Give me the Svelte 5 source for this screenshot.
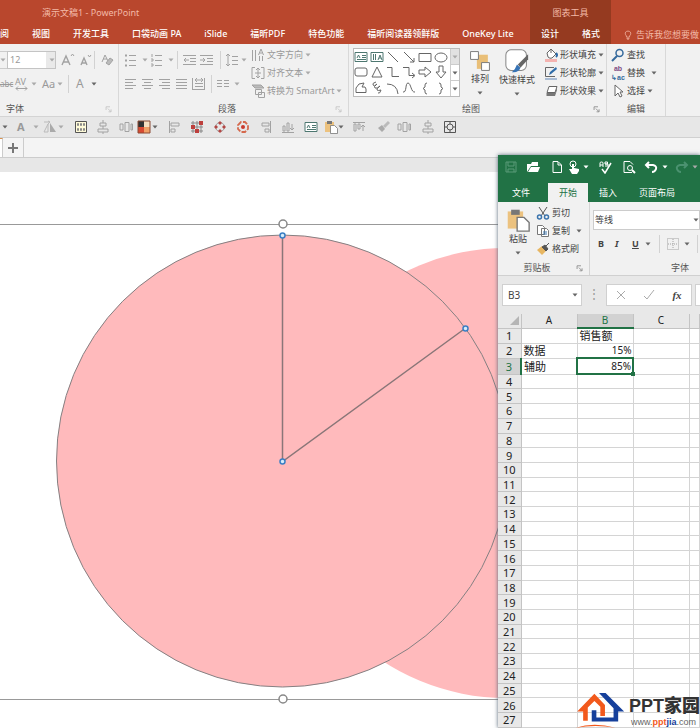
<script lang="ts">
    const tabs = ["阅", "视图", "开发工具", "口袋动画 PA", "iSlide", "福昕PDF", "特色功能", "福昕阅读器领鲜版", "OneKey Lite"];

    const shapes = [
        "textbox", "vtextbox", "line", "arrowline", "rect", "oval",
        "round", "triangle", "elbow", "elbowarrow", "rightarrow", "downarrow",
        "freeform", "scribble", "arc", "curve", "lbrace", "rbrace",
    ];

    const quick = [
        "caretdark", "fonta", "caret", "flip", "caret", "grid", "aligncenter", "distribute",
        "palette", "caretdark", "alignleft", "swatches", "nodes", "nodesred", "alignright",
        "alignbottom", "textbox", "paste", "caretdark", "aligntop", "brush", "distribute",
        "aligncenter", "fit",
    ];

    // the unnamed last column fills the rest of the window
    const columns = ["A", "B", "C", ""];
    const rows = Array.from({ length: 27 }, (_, i) => i + 1);
    const cells: Record<string, string> = {
        B1: "销售额",
        A2: "数据",
        B2: "15%",
        A3: "辅助",
        B3: "85%",
    };

    let fontSize = $state("12");
    let fontName = $state("等线");
    let cellRef = $state("B3");
    let formula = $state("");

    // every icon is drawn on a 14 x 14 board
    const icons: Record<string, string> = {
        caret: '<path d="M.5 5.500h5l-2.500 3z" fill="#aaa" stroke="none"/>',
        caretdark: '<path d="M.5 5.500h5l-2.500 3z" fill="#666" stroke="none"/>',
        caretwhite: '<path d="M.5 5.500h5l-2.500 3z" fill="#fff" stroke="none"/>',
        growa: '<path d="M1 12L5 3l4 9M2.500 9h5" stroke-width="1.400"/><path d="M10 3l1.500-2L13 3"/>',
        shrinka: '<path d="M2 12l3-7 3 7M3 10h4" stroke-width="1.400"/><path d="M9 2l1.500 2L12 2"/>',
        clear: '<path d="M2 9L5 2l3 6M3 6h4"/><path d="M6 10l4-5 3 2-4 5z" fill="#bbb"/>',
        bullets: '<path d="M5 2.500h7M5 7.500h7M5 12.500h7"/><path d="M1 2.500h2M1 7.500h2M1 12.500h2" stroke-width="2"/>',
        numbers: '<path d="M5 2.500h7M5 7.500h7M5 12.500h7M2 1v3M1 6h2v2H1M1 11h2v2H1"/>',
        outdent: '<path d="M0 2.500h13M7 5.500h6M7 8.500h6M0 11.500h13M1 7h5M3 5L1 7l2 2"/>',
        indent: '<path d="M0 2.500h13M7 5.500h6M7 8.500h6M0 11.500h13M0 7h5M3 5l2 2-2 2"/>',
        linespace: '<path d="M3 1v12M1 3l2-2 2 2M1 11l2 2 2-2M7 3.500h6M7 7.500h6M7 11.500h6"/>',
        left: '<path d="M1 2.500h11M1 5.500h8M1 8.500h11M1 11.500h8"/>',
        center: '<path d="M1 2.500h11M3 5.500h7M1 8.500h11M3 11.500h7"/>',
        right: '<path d="M1 2.500h11M4 5.500h8M1 8.500h11M4 11.500h8"/>',
        justify: '<path d="M1 2.500h11M1 5.500h11M1 8.500h11M1 11.500h11"/>',
        spread: '<path d="M.5 1v12M12.500 1v12M3 6.500h8M3 9.500h8M1 12.500h11M3 3h8M5 1L3 3l2 2M9 1l2 2-2 2"/>',
        cols: '<path d="M1 3.500h5M8 3.500h5M1 6.500h5M8 6.500h5M1 9.500h5M8 9.500h5"/>',
        direction: '<path d="M1.500 2v11M4.500 2v11M8.500 8v5M11.500 8v5M7.500 7L10 1l2.500 6M8.500 5h3"/>',
        aligntext: '<path d="M4 1.500H1v11h3M10 1.500h3v11h-3M4 7h6M7 2v10M5 4l2-2 2 2M5 10l2 2 2-2"/>',
        smartart: '<path d="M1 1h9l3 3H4z" fill="#bbb"/><path d="M4.500 5.500h6v5h-6zM7.500 8.500h6v5h-6z" fill="#f1f1f1"/>',
        launcher: '<path d="M1.500 7V2.500H7M4 5l4 4M8.500 6v3.500H5"/>',
        textbox: '<path d="M1 2.500h12v9H1z" fill="#fff" stroke="#4d7770"/><path d="M3 8l1.500-3L6 8M8 5.500h4M8 7.500h4M3 9.500h9" stroke="#4d7770"/>',
        vtextbox: '<path d="M1 2.500h12v9H1z" fill="#fff" stroke="#4d7770"/><path d="M3.500 4v6M5.500 4v6M8 10l2-5 2 5M9 8h2" stroke="#4d7770"/>',
        line: '<path d="M2 2l10 10"/>',
        arrowline: '<path d="M2 2l10 10M12 8v4H8"/>',
        rect: '<path d="M1 3.500h12v8H1z"/>',
        oval: '<ellipse cx="7" cy="7.500" rx="6" ry="4.500"/>',
        round: '<rect x="1" y="3" width="12" height="8" rx="2"/>',
        triangle: '<path d="M7 2l5 10H2z"/>',
        elbow: '<path d="M1 2.500h5v9h7"/>',
        elbowarrow: '<path d="M1 2.500h6v8h5M10 8l3 2.500-3 2.500"/>',
        rightarrow: '<path d="M1 5h6V2l6 5-6 5V9H1z"/>',
        downarrow: '<path d="M5 1h4v6h3l-5 6-5-6h3z"/>',
        freeform: '<path d="M2 11.500V7l3-4 5-1-2 4q4-1 4 2v3.500z"/>',
        scribble: '<path d="M6 1Q2 2 3 4t4-1Q3 6 5 7t5-2Q6 8 7 9t4 0q-1 4-3 3"/>',
        arc: '<path d="M1 3q10 0 11 10"/>',
        curve: '<path d="M1 11C5 12 3 2 6 2s3 10 7 9"/>',
        lbrace: '<path d="M9 2Q7 2 7 4v2L5 7.500 7 9v2q0 2 2 2"/>',
        rbrace: '<path d="M5 2q2 0 2 2v2l2 1.500L7 9v2q0 2-2 2"/>',
        flip: '<path d="M1 12l4-8v8zM1 2h6M5 1l2 1-2 2" stroke="#bbb"/><path d="M7 3l6 9H7z" fill="#aaa" stroke="none"/>',
        grid: '<path d="M1.500 1.500h11v11h-11z" fill="#fffbd8" stroke="#555"/><path d="M3.500 3.500h1v2h-1zM6.500 3.500h1v2h-1zM9.500 3.500h1v2h-1zM3.500 8.500h1v2h-1zM6.500 8.500h1v2h-1zM9.500 8.500h1v2h-1z" stroke="#888"/>',
        aligncenter: '<path d="M7 0v3M7 6v3M7 12v2M4 3h6v3H4zM2 9h10v3H2z"/>',
        distribute: '<path d="M1 4h3v6H1zM6 2.500h4v9H6zM12 4h1.500v6H12z"/>',
        palette: '<path d="M1 1h6v6H1z" fill="#333" stroke="none"/><path d="M7 1h6v6H7z" fill="#f7dfc1" stroke="none"/><path d="M1 7h6v6H1z" fill="#d84a32" stroke="none"/><path d="M7 7h6v6H7z" fill="#f1a066" stroke="none"/><path d="M1 1h12v12H1z" stroke="#8b4b35"/>',
        alignleft: '<path d="M2.500 1v12M4 3h8v3H4zM4 9h4v3H4z"/>',
        alignright: '<path d="M11.500 1v12M3 3h7v3H3zM6 9h4v3H6z"/>',
        alignbottom: '<path d="M1 12.500h12M2 6h2v5H2zM6 3h2v8H6zM11 4v6M9 8l2 2 2-2"/>',
        aligntop: '<path d="M1 2.500h12M2 4h2v7H2zM6 4h2v5H6zM11 5v6M9 7l2-2 2 2"/>',
        swatches: '<path d="M2 2h2v2H2zM6 2h2v2H6zM2 10h2v2H2zM10 6h2v2h-2z" stroke="#888"/><path d="M9 1h4v4H9zM1 5h4v4H1zM5 9h4v4H5z" fill="#bd3f3c" stroke="none"/><path d="M6 6h2v2H6zM10 10h2v2h-2z" stroke="#888"/>',
        nodes: '<circle cx="7" cy="7" r="4.500"/><path d="M7 1l2 2-2 2-2-2zM7 9l2 2-2 2-2-2zM3 5l2 2-2 2-2-2zM11 5l2 2-2 2-2-2z" fill="#b34744" stroke="none"/>',
        nodesred: '<path d="M5 2L2 5v4l3 3h4l3-3V5L9 2z" stroke="#d5694d" stroke-width="1.800" stroke-dasharray="5 1.500"/><circle cx="7" cy="7" r="2" fill="#c93a2e" stroke="none"/>',
        paste: '<path d="M1 2h9v10H1z" fill="#ecc27f" stroke="none"/><path d="M3 1h5v3H3z" fill="#777" stroke="none"/><path d="M6.500 5.500h4l3 3v5h-7z" fill="#fff" stroke="#777" stroke-width=".8"/>',
        brush: '<path d="M2 8l4-3 3 4-3 3z" fill="#aaa" stroke="none"/><path d="M8 7l5-5" stroke-width="3" stroke="#bbb"/>',
        fit: '<path d="M1.500 1.500h11v11h-11z" stroke="#555"/><circle cx="7" cy="7" r="3" stroke="#555"/><path d="M7 1v3M7 10v3M1 7h3M10 7h3" stroke="#555"/>',
        arrange: '<path d="M5 3h7v9H5z" fill="#e9bf78" stroke="none"/><path d="M1 1h5v5H1zM8 8h5v5H8z" fill="#fff" stroke="#777" stroke-width=".6"/>',
        styles: '<rect x=".5" y=".5" width="12" height="12" rx="3" fill="#fff" stroke="#888" stroke-width=".6"/><path d="M13.500 3v3L9 11 7.500 9z" fill="#666" stroke="none"/><path d="M7 9l2 2q-1 3-5 2.500Q6 12 7 9z" fill="#3673b5" stroke="none"/>',
        fill: '<path d="M3 5l4-4 5 5-4 4q-2 1-4-1z" fill="#fff" stroke="#666"/><path d="M7 1v4" stroke="#666"/><path d="M12 5q2 2 0 4" stroke="#2f6ca8" stroke-width="2"/><path d="M1 11h12v3H1z" fill="#f4b3b0" stroke="none"/>',
        outline: '<path d="M10 1.500H1.500v9H11" stroke="#666"/><path d="M5 9l1-3 6-5 1 2-6 5z" fill="#2f6ca8" stroke="none"/><path d="M1 13h12" stroke="#a9bcd4" stroke-width="2"/>',
        effects: '<path d="M5 2.500h8l-2 6H3z" fill="#fff" stroke="#666"/><path d="M2.500 9h8.500l2-6v3l-2 6H2.500z" fill="#777" stroke="none"/>',
        find: '<circle cx="8.500" cy="5" r="3.500" stroke="#35699c" stroke-width="1.500"/><path d="M6 8l-5 5" stroke="#35699c" stroke-width="2"/>',
        select: '<path d="M4 1v11l3-3 2 4 2-1-2-4h3z" fill="#fff" stroke="#666"/>',
        bulb: '<path d="M5 10q0-2-1.500-3.500Q2 2 7 1.500q5 .5 3.500 5Q9 8 9 10zM5 12h4M6 13.500h2" stroke="#f6c3b2"/>',
        plus: '<path d="M7 2v10M2 7h10" stroke="#777" stroke-width="2"/>',
        save: '<path d="M2 2h10v10H2zM4 2v4h6V2M4 12V9h6v3" stroke="#5a9a79"/>',
        open: '<path d="M1 12V4h4l1-2h6v4H5z" fill="#fff" stroke="none"/><path d="M5 7h9l-2 5H2z" fill="#fff" stroke="none"/>',
        page: '<path d="M3 1.500h5L11.500 5v7.500H3zM8 2v3h3" stroke="#fff"/>',
        touch: '<circle cx="6" cy="4" r="3" stroke="#fff"/><path d="M5 4h2v4l5 1v2l-2 3H5L2 9h3z" fill="#fff" stroke="none"/>',
        spell: '<path d="M2 7V3q0-1 1.500-1T5 3v4M2 5h3M7 2h2.500v2H7zM7 4h3v2H7" stroke="#fff"/><path d="M4 9l3 4 6-10" stroke="#fff" stroke-width="1.500"/>',
        preview: '<path d="M10 12.500H2v-11h6l3 3" stroke="#fff"/><circle cx="8" cy="8" r="2.500" stroke="#fff"/><path d="M10 10l3 3" stroke="#fff" stroke-width="2"/>',
        undo: '<path d="M2 5h7q4 1 3 4-1 3-4 3M5 2L2 5l3 3" stroke="#fff" stroke-width="2"/>',
        redo: '<path d="M12 5H5Q1 6 2 9q1 3 4 3M9 2l3 3-3 3" stroke="#4b9270" stroke-width="2"/>',
        cut: '<path d="M3 1l6 9M11 1L5 10" stroke="#555"/><circle cx="3.500" cy="11" r="2" stroke="#3b74ad" stroke-width="1.500"/><circle cx="10.500" cy="11" r="2" stroke="#3b74ad" stroke-width="1.500"/>',
        copy: '<path d="M1.500 1.500h5l2 2v7h-7zM5.500 4.500h5l2 2v6h-7z" fill="#fff" stroke="#777"/><path d="M7 8h4M7 10h4" stroke="#3b74ad"/>',
        painter: '<path d="M1 8l5-4 4 5-4 4z" fill="#e7b662" stroke="none"/><path d="M6 5l3-2 3 4-2 2zM10 4l3-3" fill="#555" stroke="#555"/>',
        borders: '<path d="M1.500 1.500h11v11h-11zM7 2v10M2 7h10" stroke-dasharray="1 1"/>',
        paint: '<path d="M3 6l4-4 4 4-4 4z" stroke="#666"/><path d="M1 11h12v3H1z" fill="#ffe62e" stroke="none"/>',
        cancel: '<path d="M3 3l8 8M11 3l-8 8" stroke="#aaa"/>',
        accept: '<path d="M2 8l3 3 7-9" stroke="#aaa"/>',
    };
</script>

{#snippet icon(name: string, size = "")}
    <svg class="icon {size}" class:thin={name.startsWith("caret")} viewBox={name.startsWith("caret") ? "0 0 6 14" : "0 0 14 14"} aria-hidden="true">
        {@html icons[name]}
    </svg>
{/snippet}

<div class="screen">
    <header class="titlebar">
        <div class="titles">演示文稿1 - PowerPoint</div>
        <nav class="tabs">
            {#each tabs as tab}
                <button>{tab}</button>
            {/each}
        </nav>
        <div class="context">
            <div class="context-title">图表工具</div>
            <button>设计</button>
            <button>格式</button>
        </div>
        <button class="tell">{@render icon("bulb", "small")}告诉我您想要做</button>
    </header>

    <div class="ribbon">
        <section class="group font-group">
            <div class="group-body two-rows">
                <div class="font-top">
                    <button class="combo-end" aria-label="Font list">{@render icon("caret")}</button>
                    <label class="size-box">
                        <input bind:value={fontSize} aria-label="Font size" />
                        {@render icon("caret")}
                    </label>
                    <button aria-label="Grow font">{@render icon("growa")}</button>
                    <button aria-label="Shrink font">{@render icon("shrinka")}</button>
                    <i class="rule"></i>
                    <button aria-label="Clear formatting">{@render icon("clear")}</button>
                </div>
                <div class="font-bottom">
                    <button class="strike">abc</button>
                    <button class="kerning">
                        AV
                        <svg class="icon flat" viewBox="0 0 14 5" aria-hidden="true"><path d="M1 2.500h11M3 .5l-2 2 2 2M10 .5l2 2-2 2" /></svg>
                    </button>
                    {@render icon("caret")}
                    <button class="letters">Aa</button>
                    {@render icon("caret")}
                    <i class="rule"></i>
                    <button class="letters big">A</button>
                    {@render icon("caretdark")}
                </div>
            </div>
            <footer class="font-label">字体</footer>
            <span class="launch dim">{@render icon("launcher", "small")}</span>
        </section>

        <section class="group para-group">
            <div class="group-body para-body">
                <div class="two-rows">
                    <div class="para-top">
                        {@render icon("bullets")}{@render icon("caret")}
                        {@render icon("numbers")}{@render icon("caret")}
                        <i class="rule"></i>
                        {@render icon("outdent")}{@render icon("indent")}
                        <i class="rule"></i>
                        {@render icon("linespace")}{@render icon("caret")}
                    </div>
                    <div class="para-bottom">
                        {#each ["left", "center", "right", "justify", "spread"] as name}
                            <button aria-label={name}>{@render icon(name)}</button>
                        {/each}
                        <i class="rule"></i>
                        {@render icon("cols")}{@render icon("caret")}
                    </div>
                </div>
                <div class="stack">
                    <button>{@render icon("direction")}文字方向{@render icon("caret")}</button>
                    <button>{@render icon("aligntext")}对齐文本{@render icon("caret")}</button>
                    <button>{@render icon("smartart")}转换为 SmartArt{@render icon("caret")}</button>
                </div>
            </div>
            <footer class="launched">段落</footer>
            <span class="launch dim">{@render icon("launcher", "small")}</span>
        </section>

        <section class="group draw-group">
            <div class="group-body draw-body">
                <div class="gallery">
                    <div class="shapes">
                        {#each shapes as shape}
                            <button aria-label={shape}>{@render icon(shape)}</button>
                        {/each}
                    </div>
                    <div class="scroll">
                        <button class="off" aria-label="Up">{@render icon("caret")}</button>
                        <button aria-label="Down">{@render icon("caretdark")}</button>
                        <button aria-label="More">{@render icon("caretdark")}</button>
                    </div>
                </div>
                <button class="tall">{@render icon("arrange", "large")}排列{@render icon("caretdark")}</button>
                <button class="tall wide">{@render icon("styles", "xlarge")}快速样式{@render icon("caretdark")}</button>
                <div class="stack dark">
                    <button>{@render icon("fill")}形状填充{@render icon("caretdark")}</button>
                    <button>{@render icon("outline")}形状轮廓{@render icon("caretdark")}</button>
                    <button>{@render icon("effects")}形状效果{@render icon("caretdark")}</button>
                </div>
            </div>
            <footer class="launched">绘图</footer>
            <span class="launch">{@render icon("launcher", "small")}</span>
        </section>

        <section class="group edit-group">
            <div class="group-body">
                <div class="stack dark">
                    <button>{@render icon("find")}查找</button>
                    <button class="far"><span class="swap"><b>ab</b><b>↳ac</b></span>替换{@render icon("caretdark")}</button>
                    <button>{@render icon("select")}选择{@render icon("caretdark")}</button>
                </div>
            </div>
            <footer>编辑</footer>
        </section>
    </div>

    <div class="quick">
        {#each quick as name}
            {#if name === "fonta"}
                <button class="letters bold">A</button>
            {:else}
                {@render icon(name)}
            {/if}
        {/each}
    </div>

    <div class="docs">
        <span class="doc-edge"></span>
        <button class="add" aria-label="New tab">{@render icon("plus")}</button>
    </div>
    <div class="gutter"></div>

    <main class="canvas">
        <svg class="chart" role="img" aria-label="Pie chart, 15% and 85%">
            <circle cx="506" cy="301" r="225" fill="#ffbabc" />
            <circle cx="282.500" cy="289" r="226" fill="#ffbabc" stroke="#858082" />
            <path d="M282.500 63.500v226L465 156.500" fill="none" stroke="#8a7678" stroke-width="1.500" />
            <path d="M0 52.500h1600M0 527.500h1600" stroke="#999" />
            <g fill="#fff" stroke="#888" stroke-width="1.500">
                <circle cx="283" cy="52" r="4" />
                <circle cx="283" cy="527" r="4" />
            </g>
            <g fill="#d6ecfb" stroke="#3a7fc4" stroke-width="1.500">
                <circle cx="282.500" cy="63.500" r="2.500" />
                <circle cx="465.500" cy="156.500" r="2.500" />
                <circle cx="282.500" cy="289.500" r="2.500" />
            </g>
        </svg>
    </main>

    <div class="excel">
        <div class="x-quick">
            {#each ["save", "open", "page", "touch", "caretwhite", "spell", "preview", "undo", "caretwhite", "redo", "caret"] as name}
                {@render icon(name)}
            {/each}
        </div>
        <nav class="x-tabs">
            <button>文件</button>
            <button class="active">开始</button>
            <button>插入</button>
            <button>页面布局</button>
        </nav>

        <div class="x-ribbon">
            <section class="clip">
                <div class="clip-body">
                    <button class="tall">{@render icon("paste", "xlarge")}粘贴{@render icon("caretdark")}</button>
                    <div class="stack dark">
                        <button>{@render icon("cut")}剪切</button>
                        <button class="far">{@render icon("copy")}复制{@render icon("caretdark")}</button>
                        <button>{@render icon("painter")}格式刷</button>
                    </div>
                </div>
                <footer class="launched">剪贴板</footer>
                <span class="launch">{@render icon("launcher", "small")}</span>
            </section>
            <section class="x-font">
                <label class="font-name">
                    <input bind:value={fontName} aria-label="Font" />
                    {@render icon("caretdark")}
                </label>
                <div class="x-styles">
                    <button><b>B</b></button>
                    <button><em>I</em></button>
                    <button><u>U</u></button>
                    {@render icon("caretdark")}
                    <i class="rule"></i>
                    {@render icon("borders")}
                    {@render icon("caretdark")}
                    <i class="rule"></i>
                    {@render icon("paint")}
                </div>
                <footer>字体</footer>
            </section>
        </div>

        <div class="formula">
            <label class="name-box">
                <input bind:value={cellRef} aria-label="Cell" />
                {@render icon("caretdark")}
            </label>
            <span class="dots">⋮</span>
            <div class="actions">
                <button aria-label="Cancel">{@render icon("cancel")}</button>
                <button aria-label="Enter">{@render icon("accept")}</button>
                <button class="fx">fx</button>
            </div>
            <input class="formula-input" bind:value={formula} aria-label="Formula" />
        </div>

        <div class="sheet">
            <table>
                <thead>
                    <tr>
                        <th class="corner"><svg class="wedge" viewBox="0 0 10 10" aria-hidden="true"><path d="M10 0v10H0z" fill="#b5b5b5" /></svg></th>
                        {#each columns as column}
                            <th class:rest={!column} class:current={column === "B"}>{column}</th>
                        {/each}
                    </tr>
                </thead>
                <tbody>
                    {#each rows as row}
                        <tr>
                            <th class:current={row === 3}>{row}</th>
                            {#each columns as column}
                                <td class:number={column === "B" && row > 1} class:selected={column + row === "B3"}>{cells[column + row] ?? ""}</td>
                            {/each}
                        </tr>
                    {/each}
                </tbody>
            </table>
        </div>
    </div>

    <a class="brand" href="http://www.pptjia.com">
        <svg class="house" viewBox="12 16 150 112" aria-hidden="true">
            <path d="M18 78L70 24l32 34v34H88V64L70 46 50 66v40H36V78z" fill="#f2591c" />
            <path d="M84 22h20l56 56h-18v30H62V74h14v22h52V68z" fill="#16409b" />
            <path d="M14 127q54-18 120 0-60-10-120 0z" fill="#f2591c" />
        </svg>
        <span class="brand-text">
            <strong>PPT家园</strong>
            <span class="site">www.<b class="ppt">ppt</b><b class="jia">jia</b>.com</span>
        </span>
    </a>
</div>

<style>
    :global(body) {
        font-family: "Noto Sans", "Noto Sans CJK SC", sans-serif;
        font-size: 9px;
        line-height: 12px;
        color: #444;
    }

    .screen {
        position: relative;
        display: flex;
        flex-direction: column;
        min-height: 100vh;
        overflow: hidden;
        background: #fff;
    }

    button,
    input {
        border: 0;
        padding: 0;
        margin: 0;
        background: none;
        font: inherit;
        color: inherit;
        min-width: 0;
        white-space: nowrap;
    }

    .icon {
        display: block;
        width: 14px;
        height: 14px;
        flex: none;
        fill: none;
        stroke: #a2a2a2;
    }

    .thin {
        width: 6px;
    }

    .small {
        width: 10px;
        height: 10px;
    }

    .flat {
        height: 5px;
    }

    .large {
        width: 22px;
        height: 22px;
    }

    .xlarge {
        width: 24px;
        height: 24px;
    }

    .rule {
        width: 1px;
        height: 18px;
        background: #d2d2d2;
    }

    /* title bar */
    .titlebar {
        display: flex;
        align-items: flex-end;
        position: relative;
        height: 44px;
        background: #b9472d;
        color: #fff;
        overflow: hidden;
    }

    .titlebar button {
        font-weight: 500;
    }

    .titles {
        position: absolute;
        left: 42px;
        top: 7px;
        color: #f3b9a7;
    }

    .tabs {
        display: flex;
        flex: none;
        gap: 23px;
        width: 530px;
        box-sizing: border-box;
        padding-bottom: 4px;
    }

    .context {
        display: grid;
        grid-template-columns: 18px 18px;
        gap: 9px 23px;
        flex: none;
        box-sizing: border-box;
        width: 81px;
        height: 44px;
        padding: 7px 11px 4px;
        background: #953a20;
    }

    .context-title {
        grid-column: 1 / 3;
        text-align: center;
        color: #f3b9a7;
    }

    .titlebar .tell {
        display: flex;
        gap: 3px;
        align-items: center;
        padding: 0 0 3px 12px;
        color: #f3b9a7;
        font-weight: 400;
    }

    /* ribbon */
    .ribbon {
        display: flex;
        height: 72px;
        background: #f1f1f1;
        border-bottom: 1px solid #d4d4d4;
        color: #999;
    }

    .group {
        display: flex;
        flex-direction: column;
        flex: none;
        position: relative;
        box-sizing: border-box;
        padding-top: 2px;
        border-right: 1px solid #d8d8d8;
    }

    .group-body {
        height: 57px;
    }

    footer {
        text-align: center;
        color: #555;
    }

    .launched {
        padding-right: 13px;
    }

    .launch {
        position: absolute;
        right: 3px;
        bottom: 1px;
    }

    .launch :global(.icon) {
        stroke: #777;
    }

    .launch.dim :global(.icon) {
        stroke: #bbb;
    }

    .font-group {
        width: 119px;
    }

    .font-label {
        text-align: left;
        padding-left: 6px;
    }

    .para-group {
        width: 230px;
    }

    .draw-group {
        width: 258px;
    }

    .edit-group {
        width: 59px;
    }

    .two-rows {
        display: grid;
        grid-template-rows: 28px 20px;
        align-items: center;
    }

    .font-top,
    .font-bottom,
    .para-top,
    .para-bottom {
        display: grid;
        align-items: center;
    }

    .font-top {
        grid-template-columns: 7px 54px 18px 15px 6px 14px;
    }

    .combo-end {
        height: 18px;
        border: solid #ccc;
        border-width: 1px 0;
    }

    .size-box {
        display: flex;
        align-items: center;
        box-sizing: border-box;
        width: 49px;
        height: 18px;
        border: 1px solid #c4c4c4;
        background: linear-gradient(to right, #fff 38px, #e9e9e9 38px);
    }

    .size-box input {
        width: 40px;
        padding-left: 2px;
    }

    .font-bottom {
        grid-template-columns: 15px 16px 11px 15px 11px 8px 15px 6px;
    }

    .strike {
        font-size: 8px;
        text-decoration: line-through;
        text-align: left;
    }

    .kerning {
        line-height: 9px;
        text-align: left;
    }

    .letters {
        font-size: 11px;
        text-align: left;
    }

    .big {
        font-size: 12px;
    }

    .bold {
        font-weight: 700;
        color: #999;
    }

    .para-body {
        display: flex;
    }

    .para-top {
        grid-template-columns: 18px 8px 18px 9px 6px 17px 20px 5px 16px 6px;
        padding-left: 5px;
    }

    .para-bottom {
        grid-template-columns: 17px 17px 17px 17px 19px 5px 18px 6px;
        padding-left: 5px;
    }

    .stack {
        display: flex;
        flex-direction: column;
        padding-left: 4px;
    }

    .stack button {
        display: flex;
        align-items: center;
        gap: 2px;
        height: 18px;
    }

    .dark {
        color: #444;
    }

    .draw-body {
        display: flex;
    }

    .gallery {
        display: flex;
        box-sizing: border-box;
        width: 107px;
        height: 49px;
        margin: 2px 6px 0 4px;
        border: 1px solid #bbb;
        background: #fff;
    }

    .shapes {
        display: grid;
        grid-template-columns: repeat(6, 16px);
        flex: 1;
        align-items: center;
    }

    .shapes :global(.icon) {
        stroke: #666;
    }

    .scroll {
        display: grid;
        width: 11px;
        border-left: 1px solid #ccc;
    }

    .scroll button {
        display: grid;
        place-items: center;
        border-top: 1px solid #ccc;
    }

    .scroll .off {
        background: #e2e2e2;
        border-top: 0;
    }

    .tall {
        display: flex;
        flex-direction: column;
        align-items: center;
        gap: 1px;
        width: 28px;
        padding-top: 4px;
        color: #444;
    }

    .draw-body .wide {
        width: 46px;
        padding-top: 3px;
    }

    .far {
        width: 46px;
    }

    .far > :global(.thin) {
        margin-left: auto;
    }

    .swap {
        display: grid;
        width: 14px;
        font-family: "Liberation Sans", sans-serif;
        font-size: 7px;
        line-height: 9px;
        color: #35699c;
    }

    .swap b:first-child {
        color: #7d4b84;
    }

    /* quick access row */
    .quick {
        display: grid;
        grid-template-columns: 15px 16px 10px 15px 16px 22px 23px 18px 15px 15px 23px 23px 23px 23px 22px 23px 20px 14px 14px 24px 21px 24px 22px 14px;
        align-items: center;
        height: 20px;
        padding-left: 2px;
        background: #e7e7e7;
        border-bottom: 1px solid #d0d0d0;
    }

    .docs {
        display: flex;
        height: 19px;
        background: #f4f4f4;
        border-bottom: 1px solid #ccc;
    }

    .doc-edge {
        width: 2px;
        border-top: 1px solid #d8924f;
        border-right: 1px solid #ccc;
        background: #fff;
    }

    .add {
        display: grid;
        place-items: center;
        width: 21px;
        border-right: 1px solid #ccc;
    }

    .gutter {
        height: 14px;
        background: #e7e7e7;
    }

    .canvas {
        flex: 1;
        background: #fff;
    }

    .chart {
        display: block;
        width: 100%;
        height: 556px;
    }

    /* spreadsheet window floating over the slide */
    .excel {
        position: absolute;
        left: 498px;
        top: 155px;
        right: 0;
        bottom: 0;
        display: flex;
        flex-direction: column;
        overflow: hidden;
        background: #e8e8e8;
        box-shadow: 0 0 4px #567;
    }

    .x-quick {
        display: grid;
        grid-template-columns: 22px 24px 17px 16px 15px 24px 22px 18px 13px 17px 6px;
        align-items: center;
        flex: none;
        box-sizing: border-box;
        height: 28px;
        padding: 0 0 4px 6px;
        background: #217245;
    }

    .x-tabs {
        display: flex;
        flex: none;
        height: 19px;
        background: #217245;
        color: #fff;
    }

    .x-tabs button {
        padding: 0 11px;
        width: 40px;
        flex: none;
    }

    .x-tabs button:first-child {
        width: 50px;
        padding: 0 14px;
        text-align: left;
    }

    .x-tabs .active {
        background: #f1f1f1;
        color: #217245;
    }

    .x-tabs button:last-child {
        width: auto;
    }

    .x-ribbon {
        display: flex;
        flex: none;
        height: 73px;
        background: #f1f1f1;
        border-bottom: 1px solid #d0d0d0;
    }

    .clip {
        position: relative;
        width: 92px;
        box-sizing: border-box;
        flex: none;
        border-right: 1px solid #d4d4d4;
        padding-top: 2px;
    }

    .clip-body {
        display: flex;
        height: 58px;
        padding-left: 6px;
    }

    .x-font {
        display: flex;
        flex-direction: column;
        flex: 1;
        min-width: 0;
        padding: 8px 0 0 3px;
    }

    .x-font footer {
        padding-left: 67px;
        margin-top: auto;
        padding-bottom: 1px;
    }

    .font-name {
        display: flex;
        align-items: center;
        height: 18px;
        border: 1px solid #ccc;
        background: #fff;
    }

    .font-name input {
        flex: 1;
        width: 0;
        padding-left: 1px;
    }

    .x-styles {
        display: grid;
        grid-template-columns: 17px 17px 13px 14px 7px 18px 13px 5px 14px;
        align-items: center;
        padding: 5px 0 0 5px;
    }

    .x-styles button {
        text-align: left;
    }

    .x-styles u,
    .x-styles em {
        font-weight: 700;
    }

    .formula {
        display: flex;
        flex: none;
        height: 38px;
        box-sizing: border-box;
        padding: 8px 0 8px 4px;
    }

    .name-box {
        display: flex;
        align-items: center;
        box-sizing: border-box;
        width: 80px;
        padding: 0 3px 0 5px;
        border: 1px solid #d0d0d0;
        background: #fff;
        font-size: 10px;
    }

    .name-box input {
        flex: 1;
        width: 0;
    }

    .dots {
        width: 24px;
        text-align: center;
        line-height: 20px;
        font-size: 12px;
        color: #999;
    }

    .actions {
        display: grid;
        grid-template-columns: repeat(3, 28px);
        place-items: center;
        box-sizing: border-box;
        width: 86px;
        border: 1px solid #d0d0d0;
        background: #fff;
    }

    .fx {
        font-family: "Liberation Serif", serif;
        font-style: italic;
        font-weight: 700;
        font-size: 11px;
    }

    .formula-input {
        flex: 1;
        margin-left: 3px;
        background: #fff;
        border: 1px solid #d0d0d0;
        border-right: 0;
    }

    .sheet {
        flex: 1;
        min-height: 0;
    }

    table {
        width: 100%;
        height: 100%;
        border-collapse: collapse;
        table-layout: fixed;
        background: #fff;
        color: #222;
        font-size: 11px;
        line-height: 13px;
    }

    th,
    td {
        box-sizing: border-box;
        padding: 0;
        width: 56px;
        border: solid #d4d4d4;
        border-width: 0 1px 1px 0;
        white-space: nowrap;
    }

    td {
        padding-left: 2px;
    }

    th {
        background: #e8e8e8;
        border-color: #c4c4c4;
        font-weight: 400;
        text-align: center;
    }

    thead th {
        font-size: 10px;
    }

    tr > th:first-child {
        width: 23px;
    }

    .rest {
        width: auto;
    }

    thead .current {
        background: #d2d2d2;
        color: #217245;
        border-bottom: 2px solid #217245;
    }

    tbody .current {
        background: #d2d2d2;
        color: #217245;
        border-right: 2px solid #217245;
    }

    .wedge {
        display: block;
        width: 9px;
        height: 9px;
        margin-left: auto;
        margin-right: 2px;
    }

    .number {
        font-size: 10px;
        text-align: right;
        padding-right: 1px;
    }

    .selected {
        position: relative;
        border: 2px solid #217245;
    }

    .selected::after {
        content: "";
        position: absolute;
        right: -3px;
        bottom: -3px;
        width: 4px;
        height: 4px;
        background: #217245;
    }

    /* site mark */
    .brand {
        position: absolute;
        right: 0;
        bottom: 0;
        display: flex;
        align-items: flex-end;
        gap: 4px;
        font-family: "Liberation Sans", "Noto Sans CJK SC", sans-serif;
        color: #333;
        text-decoration: none;
    }

    .house {
        width: 50px;
        height: 37px;
    }

    .brand-text {
        display: grid;
    }

    .brand strong {
        font-size: 18px;
        line-height: 20px;
        font-weight: 900;
    }

    .site {
        font-size: 9px;
        line-height: 12px;
        padding-left: 2px;
        color: #666;
    }

    .ppt {
        color: #f2591c;
    }

    .jia {
        color: #16409b;
    }
</style>
